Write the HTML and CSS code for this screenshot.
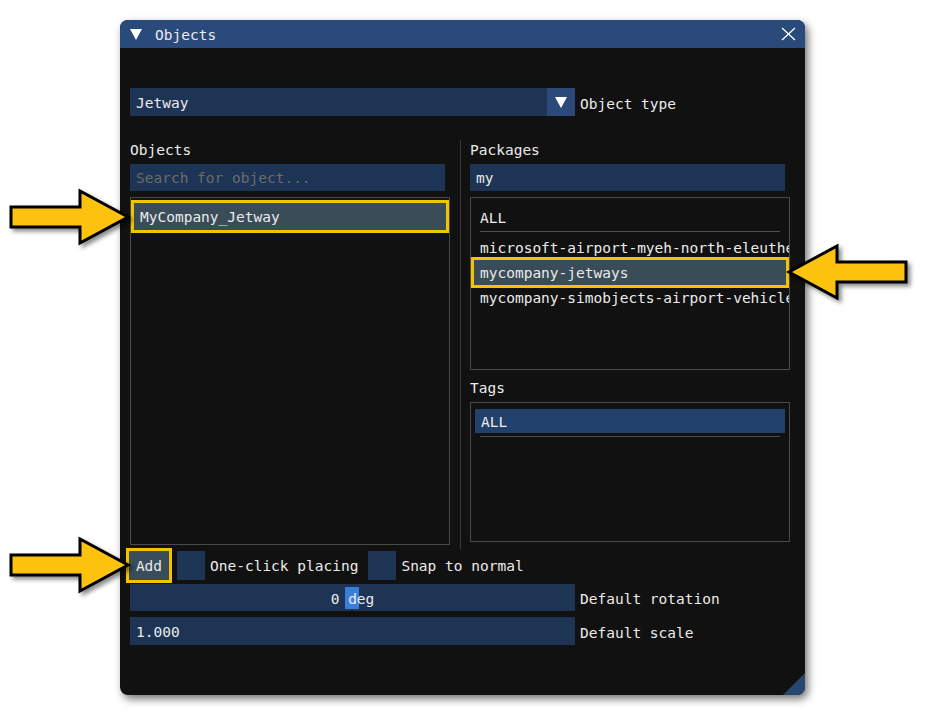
FILE: index.html
```html
<!DOCTYPE html>
<html lang="en">
<head>
    <meta charset="UTF-8">
    <meta name="viewport" content="width=device-width, initial-scale=1.0">
    <title>Objects</title>
    <link rel="stylesheet" href="styles.css">
</head>
<body>
<div class="page">

    <!-- Objects tool window -->
    <div class="window">
        <div class="title-bar">
            <span class="collapse-tri"></span>
            <span class="title">Objects</span>
            <svg class="close" width="15" height="14" viewBox="0 0 15 14">
                <path d="M1 1 L14 13 M14 1 L1 13" stroke="#ffffff" stroke-width="1.3" fill="none"/>
            </svg>
        </div>

        <div class="content">
            <div class="field-row">
                <div class="combo">
                    <span class="combo-value">Jetway</span>
                    <span class="combo-arrow"><span class="tri"></span></span>
                </div>
                <span class="field-label">Object type</span>
            </div>

            <div class="columns">
                <div class="col">
                    <div class="section-label">Objects</div>
                    <div class="input placeholder">Search for object...</div>
                    <div class="list list-objects">
                        <div class="item selected">MyCompany_Jetway</div>
                    </div>
                </div>

                <div class="col-sep"></div>

                <div class="col">
                    <div class="section-label">Packages</div>
                    <div class="input">my</div>
                    <div class="list list-packages">
                        <div class="item">ALL</div>
                        <div class="list-sep"></div>
                        <div class="item">microsoft-airport-myeh-north-eleuthera</div>
                        <div class="item selected">mycompany-jetways</div>
                        <div class="item">mycompany-simobjects-airport-vehicles</div>
                    </div>
                    <div class="section-label tags-label">Tags</div>
                    <div class="list list-tags">
                        <div class="item active">ALL</div>
                        <div class="list-sep"></div>
                    </div>
                </div>
            </div>

            <div class="options-row">
                <button class="btn-add">Add</button>
                <span class="checkbox"></span>
                <span class="opt-label">One-click placing</span>
                <span class="checkbox"></span>
                <span class="opt-label">Snap to normal</span>
            </div>

            <div class="field-row slider-row">
                <div class="slider">
                    <span class="grab"></span>
                    <span class="slider-text">0 deg</span>
                </div>
                <span class="field-label">Default rotation</span>
            </div>

            <div class="field-row scale-row">
                <div class="scale-input">1.000</div>
                <span class="field-label">Default scale</span>
            </div>
        </div>

        <!-- resize grip in the corner -->
        <svg class="resize-grip" width="22" height="22" viewBox="0 0 22 22">
            <polygon points="22,0 22,22 0,22" fill="#29466f"/>
        </svg>
    </div>

    <!-- Callout arrows -->
    <svg class="arrow arrow-objects" width="124" height="60" viewBox="0 0 124 60">
        <polygon points="3,20 72,20 72,4 120,30 72,56 72,40 3,40" fill="#fdc20e" stroke="#000" stroke-width="3"/>
    </svg>
    <svg class="arrow arrow-packages" width="124" height="60" viewBox="0 0 124 60">
        <polygon points="121,20 52,20 52,4 4,30 52,56 52,40 121,40" fill="#fdc20e" stroke="#000" stroke-width="3"/>
    </svg>
    <svg class="arrow arrow-add" width="124" height="60" viewBox="0 0 124 60">
        <polygon points="3,20 72,20 72,4 120,30 72,56 72,40 3,40" fill="#fdc20e" stroke="#000" stroke-width="3"/>
    </svg>

</div>
</body>
</html>
```

FILE: styles.css
```css
body {
    margin: 0;
    background-color: #ffffff;
    font-family: "DejaVu Sans Mono", "Liberation Mono", monospace;
    font-size: 14.5px;
    color: #ebebeb;
}

.page {
    position: relative;
    width: 925px;
    height: 716px;
    padding: 20px 0 0 120px;
    box-sizing: border-box;
}

/* Window frame */
.window {
    position: relative;
    width: 685px;
    height: 675px;
    background-color: #111111;
    border-radius: 8px;
    overflow: hidden;
    box-shadow: 3px 4px 9px rgba(0, 0, 0, 0.55);
}

.title-bar {
    height: 28px;
    background-color: #2a4a7b;
    display: flex;
    align-items: center;
    padding: 0 9px 0 10px;
}

.collapse-tri {
    width: 0;
    height: 0;
    border-left: 6.5px solid transparent;
    border-right: 6.5px solid transparent;
    border-top: 11px solid #ffffff;
}

.title {
    margin-left: 13px;
    padding-top: 2px;
}

.close {
    margin-left: auto;
}

.content {
    padding: 40px 10px 0 10px;
}

/* Rows with a field and a label to the right */
.field-row {
    display: flex;
    align-items: center;
    height: 28px;
}

.field-label {
    margin-left: 5px;
    padding-top: 3px;
}

.combo {
    width: 445px;
    height: 28px;
    display: flex;
    background-color: #1d3454;
}

.combo-value {
    flex: 1;
    padding: 2px 0 0 6px;
    line-height: 26px;
}

.combo-arrow {
    width: 28px;
    background-color: #2b4a7a;
    display: flex;
    align-items: center;
    justify-content: center;
}

.tri {
    width: 0;
    height: 0;
    border-left: 6px solid transparent;
    border-right: 6px solid transparent;
    border-top: 11px solid #ffffff;
}

/* Two columns */
.columns {
    display: flex;
    margin-top: 24px;
    height: 410px;
}

.col {
    width: 320px;
    display: flex;
    flex-direction: column;
}

.col-sep {
    width: 1px;
    background-color: #383838;
    margin: 0 9px 0 10px;
}

.section-label {
    height: 18px;
    line-height: 20px;
}

.tags-label {
    margin-top: 8px;
}

.input {
    width: 315px;
    height: 27px;
    line-height: 29px;
    margin-top: 6px;
    padding-left: 6px;
    box-sizing: border-box;
    background-color: #1d3454;
}

.placeholder {
    color: #6c6c6c;
}

.list {
    margin-top: 6px;
    border: 1px solid #4a4a4a;
    box-sizing: border-box;
    white-space: nowrap;
}

.list-objects {
    height: 348px;
    padding-top: 2px;
}

.list-packages {
    height: 173px;
    padding-top: 7px;
    overflow: hidden;
}

.list-tags {
    height: 140px;
    padding: 6px 4px 0 4px;
}

.item {
    height: 25px;
    line-height: 27px;
    padding-left: 9px;
}

.item.selected {
    background-color: #3a4c58;
    border: 3px solid #f3c300;
    box-sizing: border-box;
}

.list-objects .item.selected {
    height: 33px;
    line-height: 29px;
    padding-left: 6px;
}

.list-packages .item.selected {
    height: 31px;
    margin: -3px 0;
    padding-left: 6px;
}

.item.active {
    height: 24px;
    line-height: 26px;
    padding-left: 6px;
    background-color: #21406b;
}

.list-sep {
    height: 1px;
    background-color: #4d4d4d;
    margin: 1px 9px 3px 9px;
}

.list-tags .list-sep {
    margin: 3px 5px 0 5px;
}

/* Buttons and checkboxes */
.options-row {
    display: flex;
    align-items: center;
    height: 29px;
    margin-top: 1px;
}

.btn-add {
    width: 40px;
    height: 29px;
    margin-left: -1px;
    padding: 0;
    border: none;
    background-color: #3a4d5a;
    box-shadow: 0 0 0 3px #f3c300;
    color: #ebebeb;
    font-family: inherit;
    font-size: inherit;
}

.checkbox {
    width: 28px;
    height: 29px;
    margin-left: 8px;
    background-color: #1d3454;
}

.opt-label + .checkbox {
    margin-left: 10px;
}

.opt-label {
    margin-left: 5px;
}

/* Slider and scale */
.slider-row {
    margin-top: 4px;
    height: 27px;
}

.slider {
    position: relative;
    width: 445px;
    height: 27px;
    background-color: #1d3454;
    text-align: center;
    line-height: 30px;
}

.grab {
    position: absolute;
    left: 215px;
    top: 3px;
    width: 14px;
    height: 22px;
    background-color: #3b7ddb;
}

.slider-text {
    position: relative;
}

.scale-row {
    margin-top: 6px;
}

.scale-input {
    width: 445px;
    height: 28px;
    line-height: 31px;
    padding-left: 6px;
    box-sizing: border-box;
    background-color: #1d3454;
}

.resize-grip {
    position: absolute;
    right: 0;
    bottom: 0;
}

/* Yellow callout arrows over the screenshot */
.arrow {
    position: absolute;
    filter: drop-shadow(3px 3px 2px rgba(0, 0, 0, 0.45));
}

.arrow-objects {
    left: 8px;
    top: 187px;
}

.arrow-packages {
    left: 785px;
    top: 242px;
}

.arrow-add {
    left: 8px;
    top: 535px;
}
```
